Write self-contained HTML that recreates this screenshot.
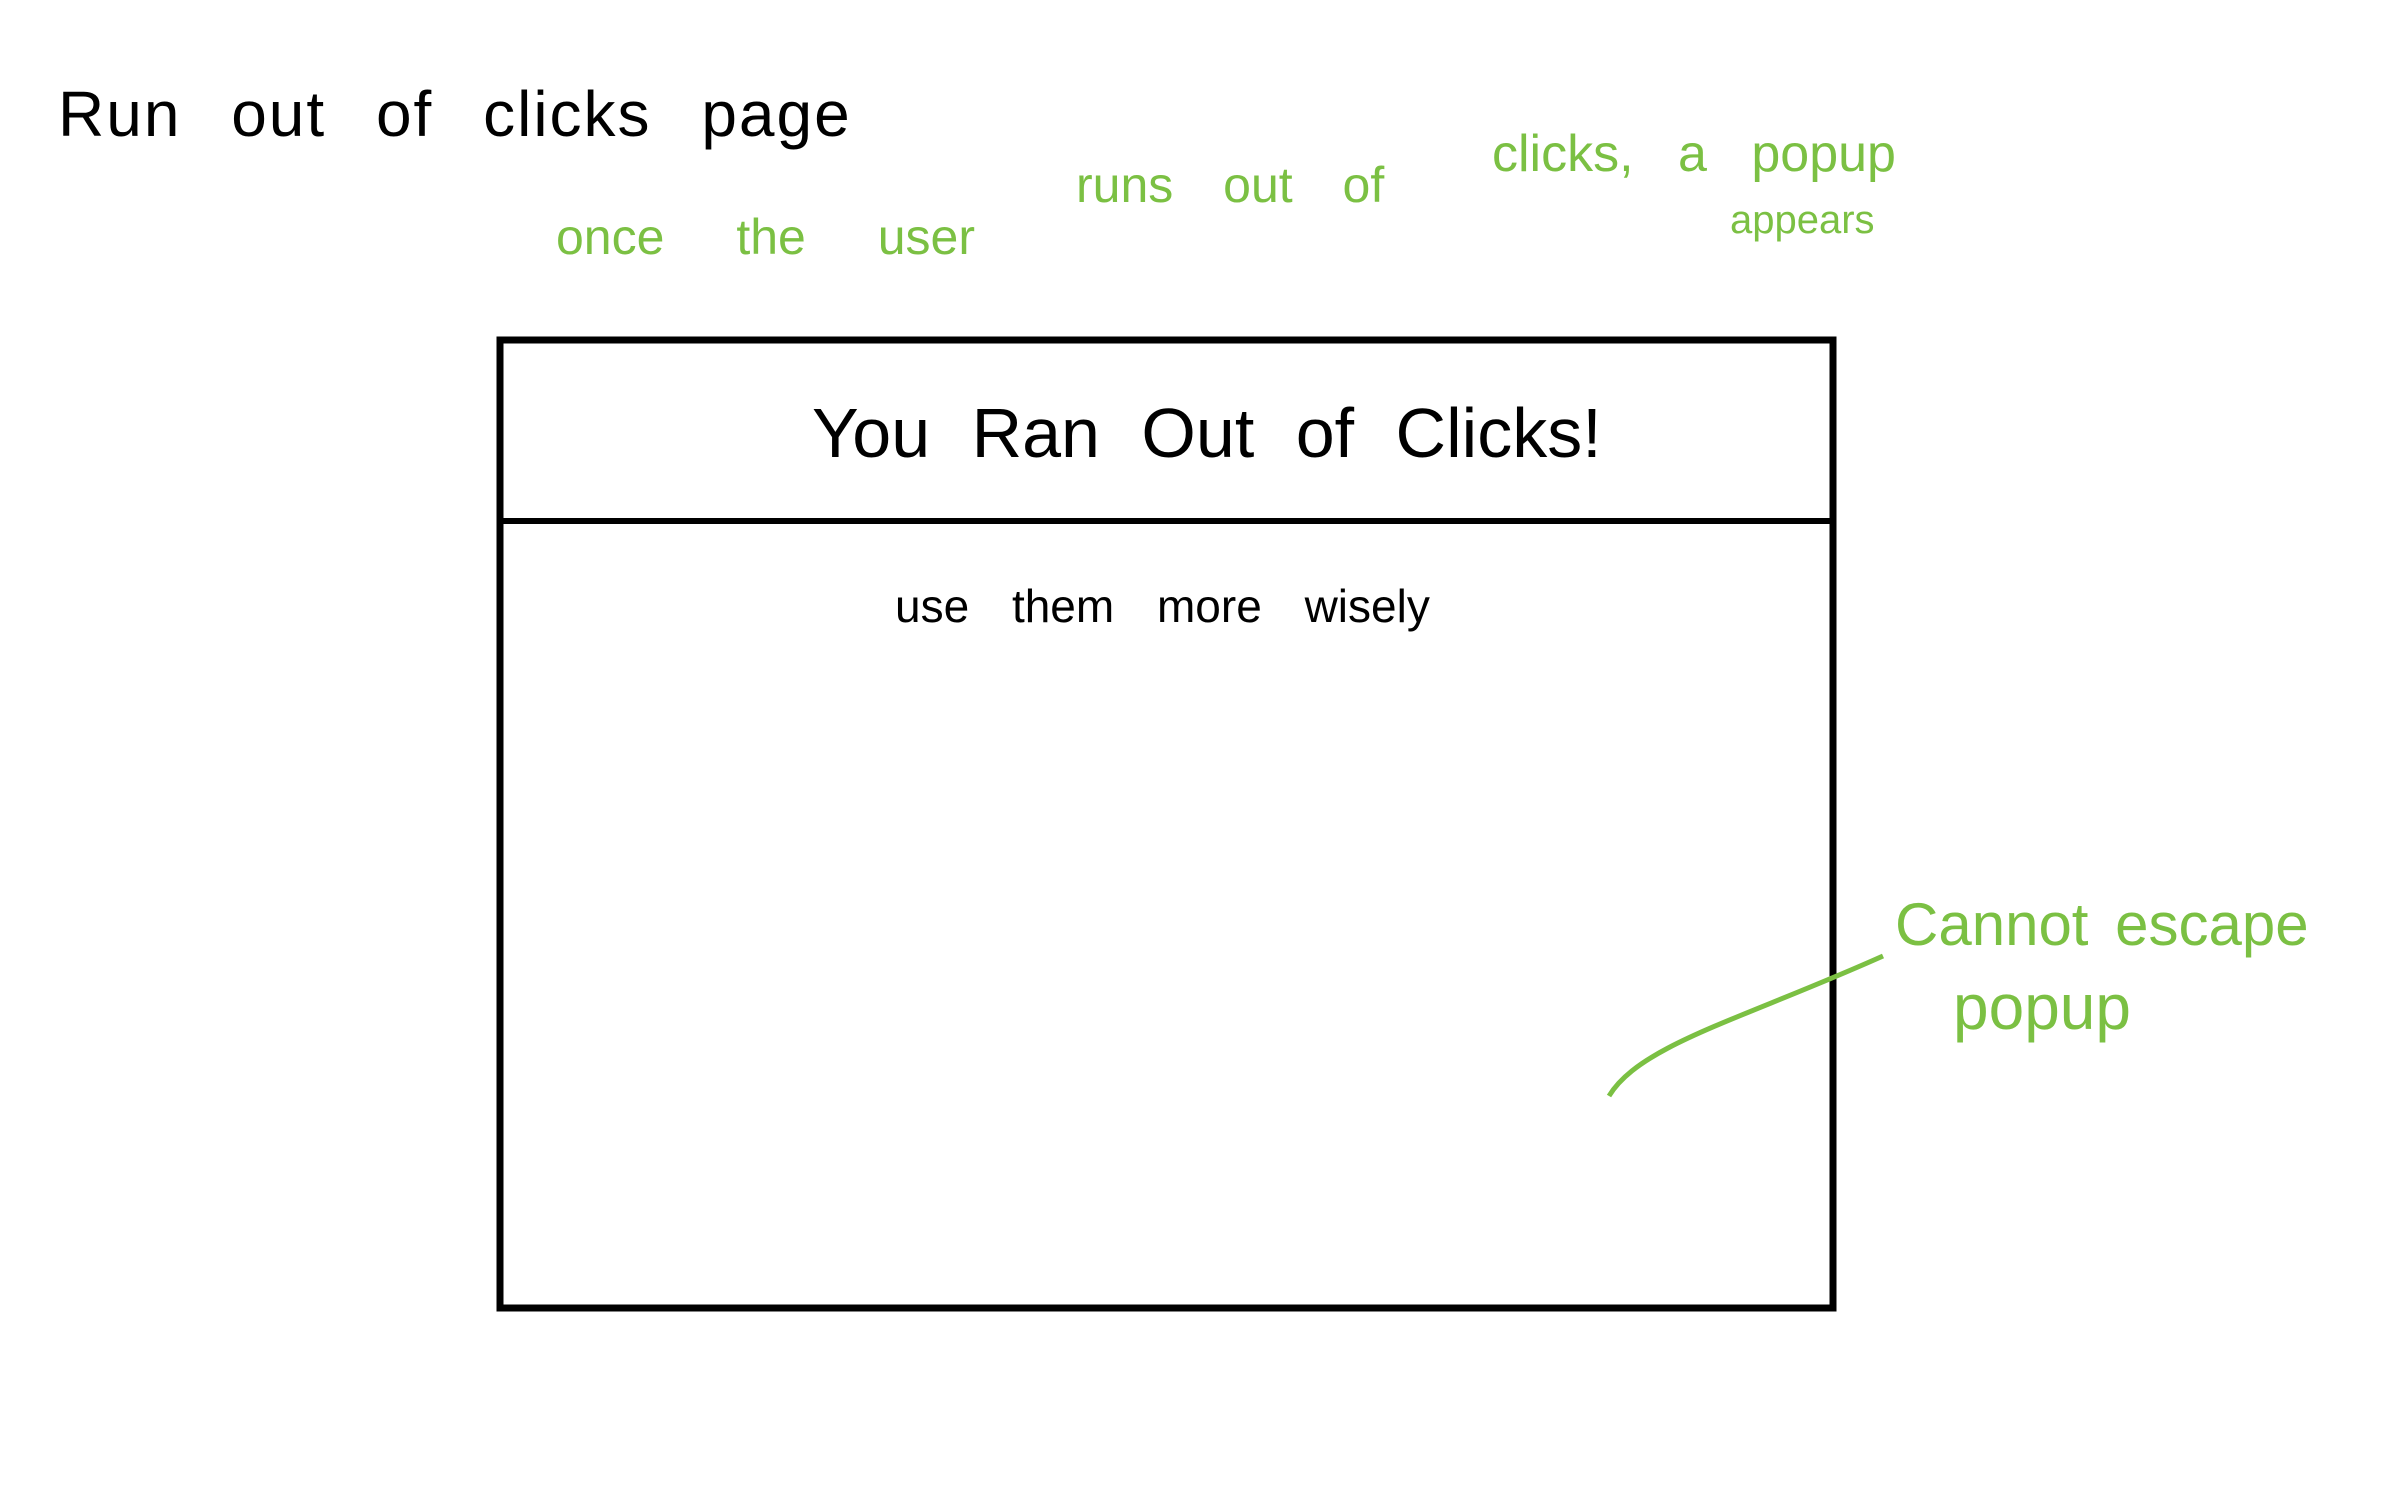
<!DOCTYPE html>
<html><head><meta charset="utf-8"><style>
html,body{margin:0;padding:0;background:#fff;width:2386px;height:1491px;overflow:hidden;position:relative;font-family:"Liberation Sans",sans-serif}
.t{position:absolute;white-space:nowrap;line-height:1}
.g{color:#7bc043}
</style></head><body>
<div class="t" style="left:58px;top:82px;font-size:64px;color:#000;letter-spacing:2px;word-spacing:30px">Run out of clicks page</div>
<div class="t g" style="left:556px;top:212px;font-size:50px;word-spacing:58px">once the user</div>
<div class="t g" style="left:1076px;top:160px;font-size:50px;word-spacing:36px">runs out of</div>
<div class="t g" style="left:1492px;top:128px;font-size:52px;word-spacing:30px">clicks, a popup</div>
<div class="t g" style="left:1730px;top:200px;font-size:40px">appears</div>
<svg style="position:absolute;left:0;top:0" width="2386" height="1491">
<rect x="500" y="340" width="1333" height="968" fill="none" stroke="#000" stroke-width="7"/>
<line x1="500" y1="521" x2="1836" y2="521" stroke="#000" stroke-width="6"/>
<path d="M1609 1096 C1640 1045 1740 1020 1883 956" fill="none" stroke="#7bc043" stroke-width="5"/>
</svg>
<div class="t" style="left:812px;top:398px;font-size:70px;word-spacing:22px">You Ran Out of Clicks!</div>
<div class="t" style="left:895px;top:583px;font-size:46px;word-spacing:30px">use them more wisely</div>
<div class="t g" style="left:1895px;top:895px;font-size:60px;word-spacing:10px">Cannot escape</div>
<div class="t g" style="left:1953px;top:975px;font-size:64px">popup</div>
</body></html>
